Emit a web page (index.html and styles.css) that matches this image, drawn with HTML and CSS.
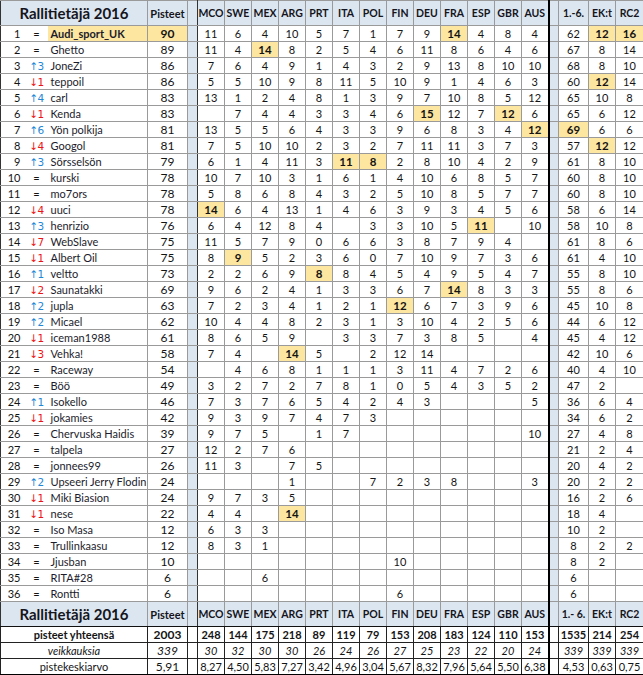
FILE: index.html
```html
<!DOCTYPE html>
<html lang="fi">
<head>
<meta charset="utf-8">
<title>Rallitietäjä 2016</title>
<link rel="stylesheet" href="styles.css">
</head>
<body>
<table class="board">
<colgroup>
<col class="w-rk"><col class="w-ch"><col class="w-nm"><col class="w-pt"><col class="w-sp">
<col class="w-r"><col class="w-r"><col class="w-r"><col class="w-r"><col class="w-r"><col class="w-r"><col class="w-r"><col class="w-r"><col class="w-r"><col class="w-r"><col class="w-r"><col class="w-r"><col class="w-r">
<col class="w-sp2"><col class="w-c1"><col class="w-ek"><col class="w-rc">
</colgroup>
<thead>
<tr class="head"><th colspan="3" class="title">Rallitietäjä 2016</th><th class="pt">Pisteet</th><th class="sp"></th><th>MCO</th><th>SWE</th><th>MEX</th><th>ARG</th><th>PRT</th><th>ITA</th><th>POL</th><th>FIN</th><th>DEU</th><th>FRA</th><th>ESP</th><th>GBR</th><th>AUS</th><th class="sp2"></th><th>1.-6.</th><th>EK:t</th><th>RC2</th></tr>
</thead>
<tbody>
<tr><td class="rk">1</td><td class="ch">=</td><td class="nm hl">Audi_sport_UK</td><td class="pt hl">90</td><td class="sp"></td><td>11</td><td>6</td><td>4</td><td>10</td><td>5</td><td>7</td><td>1</td><td>7</td><td>9</td><td class="hl">14</td><td>4</td><td>8</td><td>4</td><td class="sp2"></td><td>62</td><td class="hl">12</td><td class="hl">16</td></tr>
<tr><td class="rk">2</td><td class="ch">=</td><td class="nm">Ghetto</td><td class="pt">89</td><td class="sp"></td><td>11</td><td>4</td><td class="hl">14</td><td>8</td><td>2</td><td>5</td><td>4</td><td>6</td><td>11</td><td>8</td><td>6</td><td>4</td><td>6</td><td class="sp2"></td><td>67</td><td>8</td><td>14</td></tr>
<tr><td class="rk">3</td><td class="ch"><span class="up">↑3</span></td><td class="nm">JoneZi</td><td class="pt">86</td><td class="sp"></td><td>7</td><td>6</td><td>4</td><td>9</td><td>1</td><td>4</td><td>3</td><td>2</td><td>9</td><td>13</td><td>8</td><td>10</td><td>10</td><td class="sp2"></td><td>68</td><td>8</td><td>10</td></tr>
<tr><td class="rk">4</td><td class="ch"><span class="dn">↓1</span></td><td class="nm">teppoil</td><td class="pt">86</td><td class="sp"></td><td>5</td><td>5</td><td>10</td><td>9</td><td>8</td><td>11</td><td>5</td><td>10</td><td>9</td><td>1</td><td>4</td><td>6</td><td>3</td><td class="sp2"></td><td>60</td><td class="hl">12</td><td>14</td></tr>
<tr><td class="rk">5</td><td class="ch"><span class="up">↑4</span></td><td class="nm">carl</td><td class="pt">83</td><td class="sp"></td><td>13</td><td>1</td><td>2</td><td>4</td><td>8</td><td>1</td><td>3</td><td>9</td><td>7</td><td>10</td><td>8</td><td>5</td><td>12</td><td class="sp2"></td><td>65</td><td>10</td><td>8</td></tr>
<tr><td class="rk">6</td><td class="ch"><span class="dn">↓1</span></td><td class="nm">Kenda</td><td class="pt">83</td><td class="sp"></td><td></td><td>7</td><td>4</td><td>4</td><td>3</td><td>3</td><td>4</td><td>6</td><td class="hl">15</td><td>12</td><td>7</td><td class="hl">12</td><td>6</td><td class="sp2"></td><td>65</td><td>6</td><td>12</td></tr>
<tr><td class="rk">7</td><td class="ch"><span class="up">↑6</span></td><td class="nm">Yön polkija</td><td class="pt">81</td><td class="sp"></td><td>13</td><td>5</td><td>5</td><td>6</td><td>4</td><td>3</td><td>3</td><td>9</td><td>6</td><td>8</td><td>3</td><td>4</td><td class="hl">12</td><td class="sp2"></td><td class="hl">69</td><td>6</td><td>6</td></tr>
<tr><td class="rk">8</td><td class="ch"><span class="dn">↓4</span></td><td class="nm">Googol</td><td class="pt">81</td><td class="sp"></td><td>7</td><td>5</td><td>10</td><td>10</td><td>2</td><td>3</td><td>2</td><td>7</td><td>11</td><td>11</td><td>3</td><td>7</td><td>3</td><td class="sp2"></td><td>57</td><td class="hl">12</td><td>12</td></tr>
<tr><td class="rk">9</td><td class="ch"><span class="up">↑3</span></td><td class="nm">Sörsselsön</td><td class="pt">79</td><td class="sp"></td><td>6</td><td>1</td><td>4</td><td>11</td><td>3</td><td class="hl">11</td><td class="hl">8</td><td>2</td><td>8</td><td>10</td><td>4</td><td>2</td><td>9</td><td class="sp2"></td><td>61</td><td>8</td><td>10</td></tr>
<tr><td class="rk">10</td><td class="ch">=</td><td class="nm">kurski</td><td class="pt">78</td><td class="sp"></td><td>10</td><td>7</td><td>10</td><td>3</td><td>1</td><td>6</td><td>1</td><td>4</td><td>10</td><td>6</td><td>8</td><td>5</td><td>7</td><td class="sp2"></td><td>60</td><td>8</td><td>10</td></tr>
<tr><td class="rk">11</td><td class="ch">=</td><td class="nm">mo7ors</td><td class="pt">78</td><td class="sp"></td><td>5</td><td>8</td><td>6</td><td>8</td><td>4</td><td>3</td><td>2</td><td>5</td><td>10</td><td>8</td><td>5</td><td>7</td><td>7</td><td class="sp2"></td><td>60</td><td>8</td><td>10</td></tr>
<tr><td class="rk">12</td><td class="ch"><span class="dn">↓4</span></td><td class="nm">uuci</td><td class="pt">78</td><td class="sp"></td><td class="hl">14</td><td>6</td><td>4</td><td>13</td><td>1</td><td>4</td><td>6</td><td>3</td><td>9</td><td>3</td><td>4</td><td>5</td><td>6</td><td class="sp2"></td><td>58</td><td>6</td><td>14</td></tr>
<tr><td class="rk">13</td><td class="ch"><span class="up">↑3</span></td><td class="nm">henrizio</td><td class="pt">76</td><td class="sp"></td><td>6</td><td>4</td><td>12</td><td>8</td><td>4</td><td></td><td>3</td><td>3</td><td>10</td><td>5</td><td class="hl">11</td><td></td><td>10</td><td class="sp2"></td><td>58</td><td>10</td><td>8</td></tr>
<tr><td class="rk">14</td><td class="ch"><span class="dn">↓7</span></td><td class="nm">WebSlave</td><td class="pt">75</td><td class="sp"></td><td>11</td><td>5</td><td>7</td><td>9</td><td>0</td><td>6</td><td>6</td><td>3</td><td>8</td><td>7</td><td>9</td><td>4</td><td></td><td class="sp2"></td><td>61</td><td>8</td><td>6</td></tr>
<tr><td class="rk">15</td><td class="ch"><span class="dn">↓1</span></td><td class="nm">Albert Oil</td><td class="pt">75</td><td class="sp"></td><td>8</td><td class="hl">9</td><td>5</td><td>2</td><td>3</td><td>6</td><td>0</td><td>7</td><td>10</td><td>9</td><td>7</td><td>3</td><td>6</td><td class="sp2"></td><td>61</td><td>4</td><td>10</td></tr>
<tr><td class="rk">16</td><td class="ch"><span class="up">↑1</span></td><td class="nm">veltto</td><td class="pt">73</td><td class="sp"></td><td>2</td><td>2</td><td>6</td><td>9</td><td class="hl">8</td><td>8</td><td>4</td><td>5</td><td>4</td><td>9</td><td>5</td><td>4</td><td>7</td><td class="sp2"></td><td>55</td><td>8</td><td>10</td></tr>
<tr><td class="rk">17</td><td class="ch"><span class="dn">↓2</span></td><td class="nm">Saunatakki</td><td class="pt">69</td><td class="sp"></td><td>9</td><td>6</td><td>2</td><td>4</td><td>1</td><td>3</td><td>3</td><td>6</td><td>7</td><td class="hl">14</td><td>8</td><td>3</td><td>3</td><td class="sp2"></td><td>55</td><td>8</td><td>6</td></tr>
<tr><td class="rk">18</td><td class="ch"><span class="up">↑2</span></td><td class="nm">jupla</td><td class="pt">63</td><td class="sp"></td><td>7</td><td>2</td><td>3</td><td>4</td><td>1</td><td>2</td><td>1</td><td class="hl">12</td><td>6</td><td>7</td><td>3</td><td>9</td><td>6</td><td class="sp2"></td><td>45</td><td>10</td><td>8</td></tr>
<tr><td class="rk">19</td><td class="ch"><span class="up">↑2</span></td><td class="nm">Micael</td><td class="pt">62</td><td class="sp"></td><td>10</td><td>4</td><td>4</td><td>8</td><td>2</td><td>3</td><td>1</td><td>3</td><td>10</td><td>4</td><td>2</td><td>5</td><td>6</td><td class="sp2"></td><td>44</td><td>6</td><td>12</td></tr>
<tr><td class="rk">20</td><td class="ch"><span class="dn">↓1</span></td><td class="nm">iceman1988</td><td class="pt">61</td><td class="sp"></td><td>8</td><td>6</td><td>5</td><td>9</td><td></td><td>3</td><td>3</td><td>7</td><td>3</td><td>8</td><td>5</td><td></td><td>4</td><td class="sp2"></td><td>45</td><td>4</td><td>12</td></tr>
<tr><td class="rk">21</td><td class="ch"><span class="dn">↓3</span></td><td class="nm">Vehka!</td><td class="pt">58</td><td class="sp"></td><td>7</td><td>4</td><td></td><td class="hl">14</td><td>5</td><td></td><td>2</td><td>12</td><td>14</td><td></td><td></td><td></td><td></td><td class="sp2"></td><td>42</td><td>10</td><td>6</td></tr>
<tr><td class="rk">22</td><td class="ch">=</td><td class="nm">Raceway</td><td class="pt">54</td><td class="sp"></td><td></td><td>4</td><td>6</td><td>8</td><td>1</td><td>1</td><td>1</td><td>3</td><td>11</td><td>4</td><td>7</td><td>2</td><td>6</td><td class="sp2"></td><td>40</td><td>4</td><td>10</td></tr>
<tr><td class="rk">23</td><td class="ch">=</td><td class="nm">Böö</td><td class="pt">49</td><td class="sp"></td><td>3</td><td>2</td><td>7</td><td>2</td><td>7</td><td>8</td><td>1</td><td>0</td><td>5</td><td>4</td><td>3</td><td>5</td><td>2</td><td class="sp2"></td><td>47</td><td>2</td><td></td></tr>
<tr><td class="rk">24</td><td class="ch"><span class="up">↑1</span></td><td class="nm">Isokello</td><td class="pt">46</td><td class="sp"></td><td>7</td><td>3</td><td>7</td><td>6</td><td>5</td><td>4</td><td>2</td><td>4</td><td>3</td><td></td><td></td><td></td><td>5</td><td class="sp2"></td><td>36</td><td>6</td><td>4</td></tr>
<tr><td class="rk">25</td><td class="ch"><span class="dn">↓1</span></td><td class="nm">jokamies</td><td class="pt">42</td><td class="sp"></td><td>9</td><td>3</td><td>9</td><td>7</td><td>4</td><td>7</td><td>3</td><td></td><td></td><td></td><td></td><td></td><td></td><td class="sp2"></td><td>34</td><td>6</td><td>2</td></tr>
<tr><td class="rk">26</td><td class="ch">=</td><td class="nm">Chervuska Haidis</td><td class="pt">39</td><td class="sp"></td><td>9</td><td>7</td><td>5</td><td></td><td>1</td><td>7</td><td></td><td></td><td></td><td></td><td></td><td></td><td>10</td><td class="sp2"></td><td>27</td><td>4</td><td>8</td></tr>
<tr><td class="rk">27</td><td class="ch">=</td><td class="nm">talpela</td><td class="pt">27</td><td class="sp"></td><td>12</td><td>2</td><td>7</td><td>6</td><td></td><td></td><td></td><td></td><td></td><td></td><td></td><td></td><td></td><td class="sp2"></td><td>21</td><td>2</td><td>4</td></tr>
<tr><td class="rk">28</td><td class="ch">=</td><td class="nm">jonnees99</td><td class="pt">26</td><td class="sp"></td><td>11</td><td>3</td><td></td><td>7</td><td>5</td><td></td><td></td><td></td><td></td><td></td><td></td><td></td><td></td><td class="sp2"></td><td>20</td><td>4</td><td>2</td></tr>
<tr><td class="rk">29</td><td class="ch"><span class="up">↑2</span></td><td class="nm">Upseeri Jerry Flodin</td><td class="pt">24</td><td class="sp"></td><td></td><td></td><td></td><td>1</td><td></td><td></td><td>7</td><td>2</td><td>3</td><td>8</td><td></td><td></td><td>3</td><td class="sp2"></td><td>20</td><td>2</td><td>2</td></tr>
<tr><td class="rk">30</td><td class="ch"><span class="dn">↓1</span></td><td class="nm">Miki Biasion</td><td class="pt">24</td><td class="sp"></td><td>9</td><td>7</td><td>3</td><td>5</td><td></td><td></td><td></td><td></td><td></td><td></td><td></td><td></td><td></td><td class="sp2"></td><td>16</td><td>2</td><td>6</td></tr>
<tr><td class="rk">31</td><td class="ch"><span class="dn">↓1</span></td><td class="nm">nese</td><td class="pt">22</td><td class="sp"></td><td>4</td><td>4</td><td></td><td class="hl">14</td><td></td><td></td><td></td><td></td><td></td><td></td><td></td><td></td><td></td><td class="sp2"></td><td>18</td><td>4</td><td></td></tr>
<tr><td class="rk">32</td><td class="ch">=</td><td class="nm">Iso Masa</td><td class="pt">12</td><td class="sp"></td><td>6</td><td>3</td><td>3</td><td></td><td></td><td></td><td></td><td></td><td></td><td></td><td></td><td></td><td></td><td class="sp2"></td><td>10</td><td>2</td><td></td></tr>
<tr><td class="rk">33</td><td class="ch">=</td><td class="nm">Trullinkaasu</td><td class="pt">12</td><td class="sp"></td><td>8</td><td>3</td><td>1</td><td></td><td></td><td></td><td></td><td></td><td></td><td></td><td></td><td></td><td></td><td class="sp2"></td><td>8</td><td>2</td><td>2</td></tr>
<tr><td class="rk">34</td><td class="ch">=</td><td class="nm">Jjusban</td><td class="pt">10</td><td class="sp"></td><td></td><td></td><td></td><td></td><td></td><td></td><td></td><td>10</td><td></td><td></td><td></td><td></td><td></td><td class="sp2"></td><td>8</td><td>2</td><td></td></tr>
<tr><td class="rk">35</td><td class="ch">=</td><td class="nm">RITA#28</td><td class="pt">6</td><td class="sp"></td><td></td><td></td><td>6</td><td></td><td></td><td></td><td></td><td></td><td></td><td></td><td></td><td></td><td></td><td class="sp2"></td><td>6</td><td></td><td></td></tr>
<tr><td class="rk">36</td><td class="ch">=</td><td class="nm">Rontti</td><td class="pt">6</td><td class="sp"></td><td></td><td></td><td></td><td></td><td></td><td></td><td></td><td>6</td><td></td><td></td><td></td><td></td><td></td><td class="sp2"></td><td>6</td><td></td><td></td></tr>
</tbody>
<tfoot>
<tr class="head foot-head"><th colspan="3" class="title">Rallitietäjä 2016</th><th class="pt">Pisteet</th><th class="sp"></th><th>MCO</th><th>SWE</th><th>MEX</th><th>ARG</th><th>PRT</th><th>ITA</th><th>POL</th><th>FIN</th><th>DEU</th><th>FRA</th><th>ESP</th><th>GBR</th><th>AUS</th><th class="sp2"></th><th>1.- 6.</th><th>EK:t</th><th>RC2</th></tr>
<tr class="sum tot"><td colspan="3" class="lbl">pisteet yhteensä</td><td class="pt">2003</td><td class="sp"></td><td>248</td><td>144</td><td>175</td><td>218</td><td>89</td><td>119</td><td>79</td><td>153</td><td>208</td><td>183</td><td>124</td><td>110</td><td>153</td><td class="sp2"></td><td>1535</td><td>214</td><td>254</td></tr>
<tr class="sum cnt"><td colspan="3" class="lbl">veikkauksia</td><td class="pt">339</td><td class="sp"></td><td>30</td><td>32</td><td>30</td><td>30</td><td>26</td><td>24</td><td>26</td><td>27</td><td>25</td><td>23</td><td>22</td><td>20</td><td>24</td><td class="sp2"></td><td>339</td><td>339</td><td>339</td></tr>
<tr class="sum avg"><td colspan="3" class="lbl">pistekeskiarvo</td><td class="pt">5,91</td><td class="sp"></td><td>8,27</td><td>4,50</td><td>5,83</td><td>7,27</td><td>3,42</td><td>4,96</td><td>3,04</td><td>5,67</td><td>8,32</td><td>7,96</td><td>5,64</td><td>5,50</td><td>6,38</td><td class="sp2"></td><td>4,53</td><td>0,63</td><td>0,75</td></tr>
</tfoot>
</table>
</body>
</html>
```

FILE: styles.css
```css
html, body {
  margin: 0;
  padding: 0;
  background: #ffffff;
}

body {
  font-family: Lato, "Liberation Sans", "DejaVu Sans", sans-serif;
  color: #141414;
}

.board {
  border-collapse: collapse;
  table-layout: fixed;
  width: 643px;
  font-size: 11px;
}

.w-rk { width: 22px; }
.w-ch { width: 25px; }
.w-nm { width: 100px; }
.w-pt { width: 40px; }
.w-sp { width: 10px; }
.w-r { width: 27px; }
.w-sp2 { width: 10px; }
.w-c1 { width: 30px; }
.w-ek { width: 27px; }
.w-rc { width: 28px; }

.board td,
.board th {
  border: 1px solid #9a9a9a;
  padding: 0;
  text-align: center;
  vertical-align: middle;
  white-space: nowrap;
  overflow: hidden;
  line-height: 1;
}

.board tbody tr { height: 16px; }
.board tr.sum { height: 16px; }

.board .head { height: 25px; }
.board .head th {
  background: #dce6f1;
  font-weight: 700;
  font-size: 10.5px;
  color: #151520;
}
.board .head .title {
  font-size: 15px;
  border-left-color: #333;
}
.board .head th.pt { font-size: 11px; }

.board td.rk {
  text-align: right;
  padding-right: 2px;
  border-right: none;
  border-left-color: #333;
}
.board td.ch {
  border-left: none;
  border-right: none;
  padding-left: 3px;
  text-align: center;
}
.board td.nm {
  border-left: none;
  text-align: left;
  padding-left: 3px;
  color: #1c1c2c;
}
.board td.pt {
  font-size: 12px;
}

.up, .dn {
  font-family: "DejaVu Sans", Lato, sans-serif;
  font-size: 10.5px;
  letter-spacing: -0.5px;
}
.up { color: #1f88d6; }
.dn { color: #ee1313; }

.board .sp,
.board .sp2 {
  background: #dce6f1;
}
.board .sp { border-right-color: #333; }
.board .sp2 { border-left: 2px solid #000; }

.board td.hl {
  background: #fde6a0;
  font-weight: 700;
  font-size: 11.5px;
}
.board td.nm.hl { font-size: 11px; }
.board td.pt.hl { font-size: 12px; }

.board tr > :last-child { border-right-color: #000; }

.board .foot-head th { border-bottom-color: #111; }

.board .sum td { border-color: #222; }
.board .sum .sp,
.board .sum .sp2 { background: #ffffff; }
.board .sum .sp2 { border-left: 2px solid #000; }
.board .sum td.lbl {
  border-left-color: #222;
  font-size: 11px;
}
.board .tot td { font-weight: 700; }
.board .cnt td { font-style: italic; }
.board .avg td { font-weight: 400; border-bottom-color: #000; }
.board .sum td.pt { font-size: 12px; }
```
